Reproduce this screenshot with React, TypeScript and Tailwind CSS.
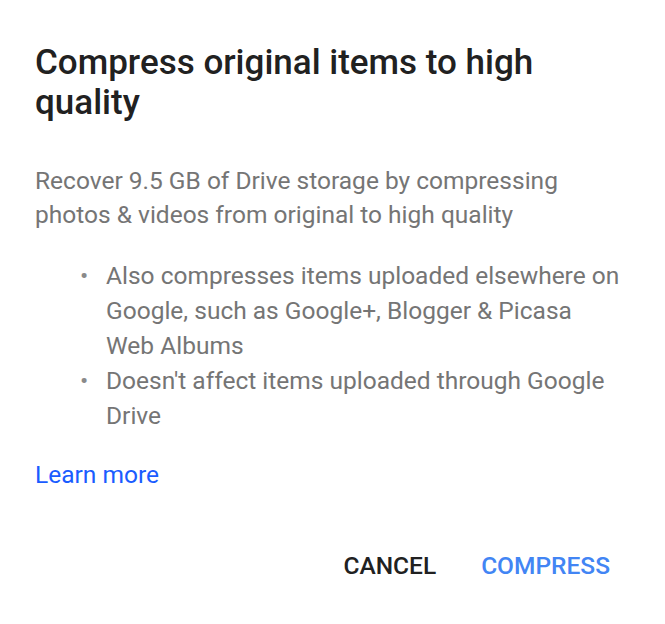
export default function App() {
  return (
    <div className="w-[665px] h-[624px] bg-white font-['Roboto',sans-serif]">
      <div className="px-[35px] pt-[43px] whitespace-nowrap">
        <h1 className="text-[35px] leading-[40px] font-medium text-[#212121]">
          Compress original items to high
          <br />
          quality
        </h1>
        <p className="mt-[41px] text-[24.5px] leading-[34px] text-[#757575]">
          Recover 9.5 GB of Drive storage by compressing
          <br />
          photos &amp; videos from original to high quality
        </p>
        <ul className="mt-[26px] pl-[45px] text-[24.5px] leading-[35px] text-[#757575]">
          <li className="relative pl-[26px]">
            <span className="absolute left-0 top-0 text-[#8a8a8a]">•</span>
            Also compresses items uploaded elsewhere on
            <br />
            Google, such as Google+, Blogger &amp; Picasa
            <br />
            Web Albums
          </li>
          <li className="relative pl-[26px]">
            <span className="absolute left-0 top-0 text-[#8a8a8a]">•</span>
            Doesn't affect items uploaded through Google
            <br />
            Drive
          </li>
        </ul>
        <a className="block mt-[25px] text-[24.5px] leading-[34px] text-[#1a5cff]" href="#">
          Learn more
        </a>
      </div>
      <div className="flex justify-end gap-[45px] pr-[55px] mt-[57px]">
        <button className="text-[24.5px] leading-[34px] font-medium text-[#212121]">CANCEL</button>
        <button className="text-[24.5px] leading-[34px] font-medium text-[#4285f4]">COMPRESS</button>
      </div>
    </div>
  );
}
